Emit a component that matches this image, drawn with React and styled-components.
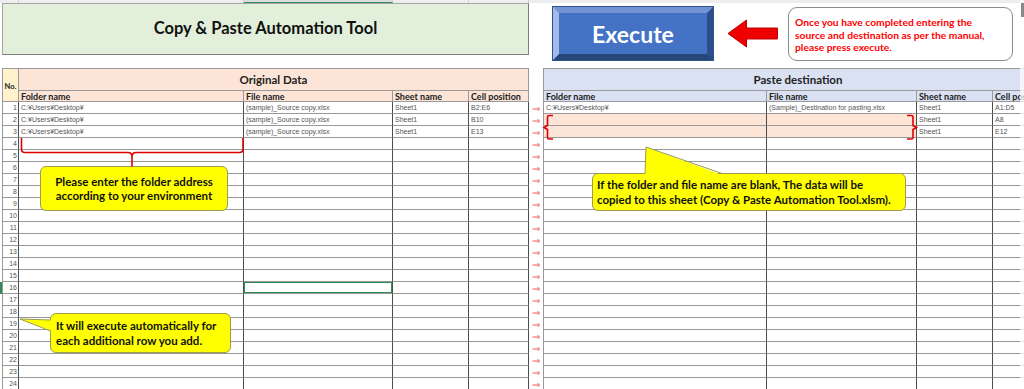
import React from 'react';
import styled, { createGlobalStyle } from 'styled-components';

const GlobalStyle = createGlobalStyle`
  html, body { margin: 0; padding: 0; background: #fff; }
  body { font-family: Lato, "Liberation Sans", sans-serif; }
`;

const Page = styled.div`
  position: relative;
  width: 1024px;
  height: 389px;
  overflow: hidden;
  background: #fff;
`;

const TopStrip = styled.div`
  height: 3px;
  display: grid;
  grid-template-columns: 19px 225px 149px 76px 60px 1fr;
  background: #eeeeee;
`;

const StripCell = styled.div`
  box-sizing: border-box;
  border-right: 1px solid #d0d0d0;
  ${p => p.$active && 'border-bottom: 1px solid #2e8b57; background: #dcdcdc;'}
`;

const TopRow = styled.div`
  display: flex;
  align-items: flex-start;
  height: 65px;
`;

const TitleBox = styled.div`
  margin-left: 2px;
  width: 527px;
  height: 52px;
  box-sizing: border-box;
  background: #e2efda;
  border: 1px solid #a6a6a6;
  border-right-color: #7f7f7f;
  border-bottom-color: #7f7f7f;
  display: flex;
  align-items: center;
  justify-content: center;
  padding-bottom: 2px;
  font: 700 16.5px Lato, "Liberation Sans", sans-serif;
  color: #111;
`;

const ExecuteButton = styled.button`
  margin: 4px 0 0 24px;
  width: 160px;
  height: 53px;
  box-sizing: border-box;
  padding: 0;
  background: #4472c4;
  border: 6px solid;
  border-color: #7394d4 #2c4e8c #27467a #a3bbe6;
  box-shadow: 0 0 0 1px #30528f;
  color: #fff;
  font: 700 23px Lato, "Liberation Sans", sans-serif;
  cursor: pointer;
`;

const ArrowIcon = styled.svg`
  flex: none;
  margin: 15px 0 0 14px;
`;

const Note = styled.div`
  margin: 4px 0 0 9px;
  width: 225px;
  height: 54px;
  box-sizing: border-box;
  border: 1px solid #8c8c8c;
  border-radius: 9px;
  padding: 8px 6px;
  display: flex;
  flex-direction: column;
  white-space: nowrap;
  font: 700 10.3px/12.5px Lato, "Liberation Sans", sans-serif;
  color: #ff0000;
`;

const TableRow = styled.div`
  display: flex;
  align-items: flex-start;
`;

const Gutter = styled.div`
  width: 2px;
  flex: none;
  padding-top: 214px;
`;

const GutterMark = styled.div`
  width: 2px;
  height: 12px;
  background: #2e8b57;
`;

const Sheet = styled.div`
  flex: none;
  display: grid;
  grid-template-columns: ${p => p.$cols};
  grid-template-rows: 22px 11px repeat(24, 12px);
  border-top: 1px solid #9a9a9a;
  border-left: 1px solid #9a9a9a;
`;

const toneBg = { pink: '#fce4d6', blue: '#d9e1f2', yellow: '#fff2cc' };

const HeadBase = styled.div`
  box-sizing: border-box;
  border-right: 1px solid #9a9a9a;
  border-bottom: 1px solid #9a9a9a;
  background: ${p => toneBg[p.$tone]};
  color: #222;
  overflow: hidden;
  white-space: nowrap;
  display: flex;
  align-items: center;
`;

const NoHead = styled(HeadBase)`
  grid-row: span 2;
  justify-content: center;
  font: 700 7.5px Lato, "Liberation Sans", sans-serif;
  padding-top: 2px;
`;

const GroupHead = styled(HeadBase)`
  grid-column: span ${p => p.$span};
  justify-content: center;
  font: 700 11.5px Lato, "Liberation Sans", sans-serif;
  padding-bottom: 1px;
`;

const ColHead = styled(HeadBase)`
  padding-left: 2px;
  font: 700 9px Lato, "Liberation Sans", sans-serif;
`;

const Cell = styled.div`
  box-sizing: border-box;
  border-right: 1px solid #4d4d4d;
  border-bottom: 1px solid #999;
  background: ${p => (p.$hl ? '#fce4d6' : '#fff')};
  padding-left: 2px;
  display: flex;
  align-items: center;
  overflow: hidden;
  white-space: nowrap;
  font: 7px "Liberation Sans", Arial, sans-serif;
  color: #555;
  ${p => p.$selected && 'box-shadow: inset 0 0 0 1px #2e8b57;'}
`;

const NumCell = styled(Cell)`
  justify-content: flex-end;
  padding: 0 1px 0 0;
`;

const ArrowCol = styled.div`
  flex: none;
  width: 14px;
  display: grid;
  grid-template-rows: 35px repeat(24, 12px);
`;

const RowArrow = styled.div`
  padding-left: 3px;
  font: 10px/12px "DejaVu Sans", sans-serif;
  color: #f26a6a;
`;

const Callout = styled.div`
  position: absolute;
  left: ${p => p.$x}px;
  top: ${p => p.$y}px;
  width: ${p => p.$w}px;
  height: ${p => p.$h}px;
  box-sizing: border-box;
  background: #ffff00;
  border: 1px solid #9c9c4a;
  border-radius: 6px;
  display: flex;
  flex-direction: column;
  justify-content: center;
  align-items: ${p => (p.$center ? 'center' : 'flex-start')};
  text-align: ${p => (p.$center ? 'center' : 'left')};
  padding-left: ${p => p.$pad}px;
  white-space: nowrap;
  font: 700 11.5px/${p => p.$lh}px Lato, "Liberation Sans", sans-serif;
  color: #111;
  z-index: 2;
`;

const Overlay = styled.svg`
  position: absolute;
  left: 0;
  top: 0;
  pointer-events: none;
  z-index: 3;
`;

const ScrollEdge = styled.div`
  position: absolute;
  right: 0;
  top: 0;
  width: 4px;
  height: 100%;
  background: rgba(255, 255, 255, 0.7);
  z-index: 4;
`;

const ScrollThumb = styled.div`
  margin: 3px 0 0 1px;
  width: 3px;
  height: 14px;
  background: #8a8a8a;
`;

const leftData = [
  ['C:¥Users¥Desktop¥', '(sample)_Source copy.xlsx', 'Sheet1', 'B2:E6'],
  ['C:¥Users¥Desktop¥', '(sample)_Source copy.xlsx', 'Sheet1', 'B10'],
  ['C:¥Users¥Desktop¥', '(sample)_Source copy.xlsx', 'Sheet1', 'E13'],
];

const rightData = [
  ['C:¥Users¥Desktop¥', '(Sample)_Destination for pasting.xlsx', 'Sheet1', 'A1:D5'],
  ['', '', 'Sheet1', 'A8'],
  ['', '', 'Sheet1', 'E12'],
];

const headers = ['Folder name', 'File name', 'Sheet name', 'Cell position'];
const rows = Array.from({ length: 24 }, (_, i) => i);

export default function App() {
  return (
    <Page>
      <GlobalStyle />
      <TopStrip>
        <StripCell />
        <StripCell />
        <StripCell $active />
        <StripCell />
        <StripCell />
        <StripCell />
      </TopStrip>

      <TopRow>
        <TitleBox>Copy &amp; Paste Automation Tool</TitleBox>
        <ExecuteButton>Execute</ExecuteButton>
        <ArrowIcon width="52" height="32" viewBox="0 0 52 32">
          <polygon
            points="1,15.5 19.5,2 19.5,10 50.5,10 50.5,21 19.5,21 19.5,29"
            fill="#ee0000"
            stroke="#c00000"
            strokeWidth="1"
          />
        </ArrowIcon>
        <Note>
          <span>Once you have completed entering the</span>
          <span>source and destination as per the manual,</span>
          <span>please press execute.</span>
        </Note>
      </TopRow>

      <TableRow>
        <Gutter>
          <GutterMark />
        </Gutter>
        <Sheet $cols="16px 225px 149px 76px 60px">
          <NoHead $tone="yellow">No.</NoHead>
          <GroupHead $tone="pink" $span={4}>Original Data</GroupHead>
          {headers.map(h => (
            <ColHead key={h} $tone="pink">{h}</ColHead>
          ))}
          {rows.map(i => (
            <React.Fragment key={i}>
              <NumCell>{i + 1}</NumCell>
              {[0, 1, 2, 3].map(c => (
                <Cell key={c} $selected={i === 15 && c === 1}>
                  {leftData[i] ? leftData[i][c] : ''}
                </Cell>
              ))}
            </React.Fragment>
          ))}
        </Sheet>

        <ArrowCol>
          <div />
          {rows.map(i => (
            <RowArrow key={i}>⇒</RowArrow>
          ))}
        </ArrowCol>

        <Sheet $cols="223px 150px 76px 60px">
          <GroupHead $tone="blue" $span={4}>Paste destination</GroupHead>
          {headers.map(h => (
            <ColHead key={h} $tone="blue">{h}</ColHead>
          ))}
          {rows.map(i => (
            <React.Fragment key={i}>
              {[0, 1, 2, 3].map(c => (
                <Cell key={c} $hl={(i === 1 || i === 2) && c < 2}>
                  {rightData[i] ? rightData[i][c] : ''}
                </Cell>
              ))}
            </React.Fragment>
          ))}
        </Sheet>
      </TableRow>

      <Callout $x={40} $y={166} $w={188} $h={45} $lh={14} $pad={0} $center>
        <span>Please enter the folder address</span>
        <span>according to your environment</span>
      </Callout>
      <Callout $x={592} $y={173} $w={314} $h={38} $lh={15} $pad={4}>
        <span>If the folder and file name are blank, The data will be</span>
        <span>copied to this sheet (Copy &amp; Paste Automation Tool.xlsm).</span>
      </Callout>
      <Callout $x={50} $y={313} $w={181} $h={40} $lh={15} $pad={5}>
        <span>It will execute automatically for</span>
        <span>each additional row you add.</span>
      </Callout>

      <Overlay width="1024" height="389" viewBox="0 0 1024 389">
        <path
          d="M21.5,138 V149 Q21.5,152.5 25,152.5 H128 Q132,152.5 132,157 V166.5 M132,157 Q132,152.5 136,152.5 H239.5 Q243,152.5 243,149 V138"
          fill="none"
          stroke="#e00000"
          strokeWidth="1.6"
        />
        <path
          d="M553,115.5 H549 Q547.5,115.5 547.5,117 V125.5 L544,127.5 L547.5,129.5 V137.5 Q547.5,139 549,139 H553"
          fill="none"
          stroke="#e00000"
          strokeWidth="1.6"
        />
        <path
          d="M907,115.5 H911.5 Q913,115.5 913,117 V125.5 L916.5,127.5 L913,129.5 V137.5 Q913,139 911.5,139 H907"
          fill="none"
          stroke="#e00000"
          strokeWidth="1.6"
        />
        <polygon points="645,175 646,147 722,175" fill="#ffff00" />
        <polyline points="645,173.5 646,147 722,173.5" fill="none" stroke="#9c9c4a" strokeWidth="1" />
        <polygon points="52,320 20,319 52,331" fill="#ffff00" />
        <polyline points="50.5,320 20,319 50.5,331" fill="none" stroke="#9c9c4a" strokeWidth="1" />
      </Overlay>

      <ScrollEdge>
        <ScrollThumb />
      </ScrollEdge>
    </Page>
  );
}
